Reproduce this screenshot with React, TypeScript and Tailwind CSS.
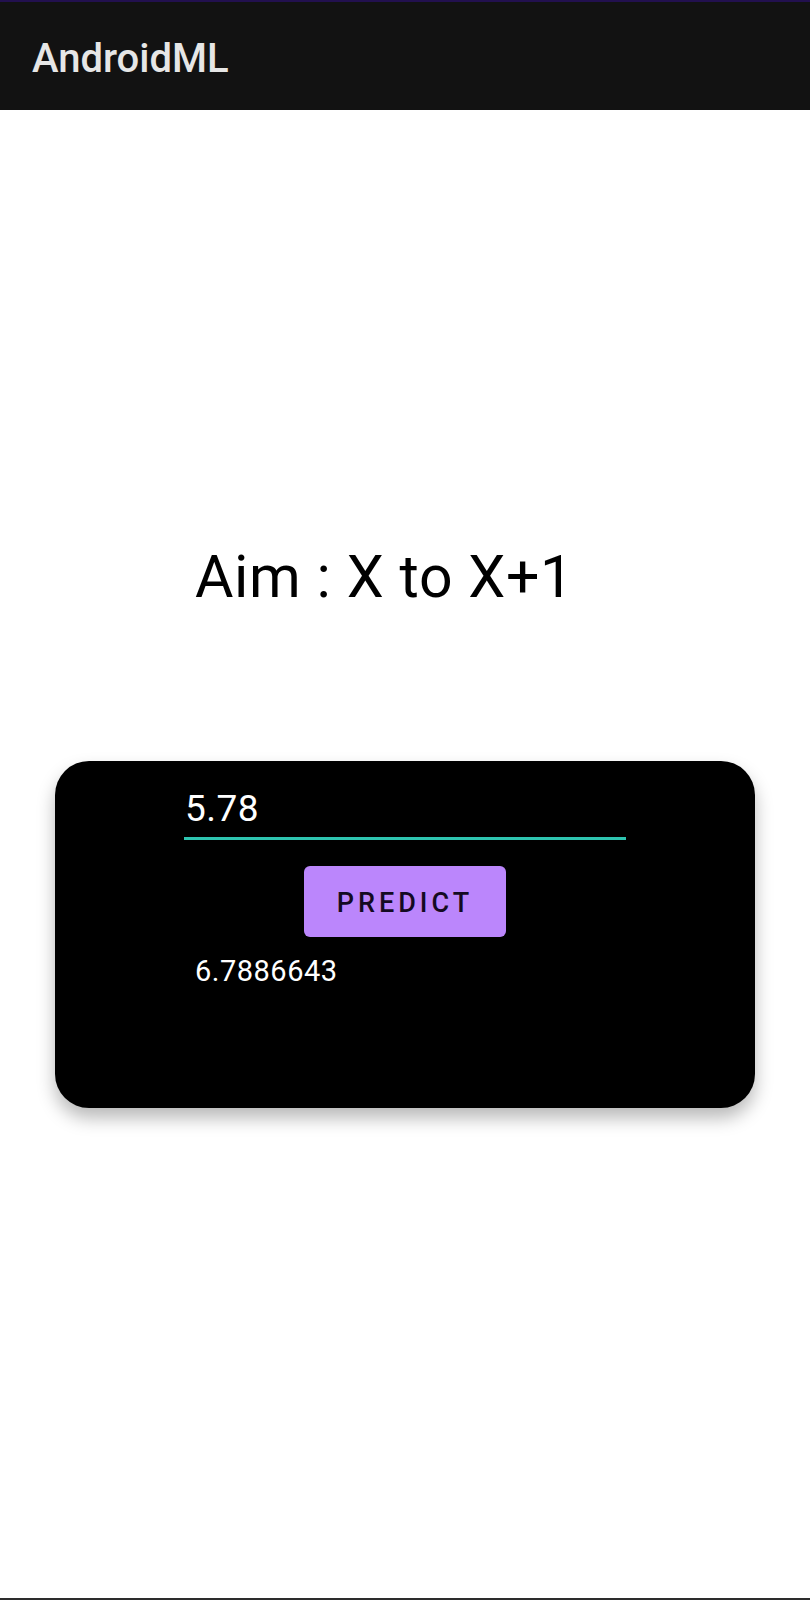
export default function App() {
  const font = { fontFamily: "Roboto, 'Noto Sans', sans-serif" };

  return (
    <div className="min-h-[1600px] w-[810px] flex flex-col bg-white" style={font}>
      <div className="h-[2px] bg-[#22104f]" />
      <div className="h-[108px] bg-[#121212] pl-[32px] pt-[37px]">
        <h1 className="text-[40px] leading-[40px] font-medium text-[#e6e6e6]">AndroidML</h1>
      </div>

      <p className="mt-[437px] pl-[195px] text-[59px] leading-[59px] tracking-[0.6px] text-black">Aim : X to X+1</p>

      <div className="mt-[155px] mx-[55px] h-[347px] rounded-[34px] bg-black shadow-[0_10px_18px_rgba(0,0,0,0.28)] flex flex-col">
        <div className="ml-[129px] w-[442px] pt-[29px]">
          <p className="pl-[1px] text-[37px] leading-[37px] tracking-[0.5px] text-white">5.78</p>
          <div className="mt-[10px] h-[3px] bg-[#2ec4b0]" />
        </div>

        <div className="mt-[26px] flex justify-center">
          <button className="w-[202px] h-[71px] pt-[4px] rounded-[6px] bg-[#bb86fc] text-[27px] font-medium tracking-[4px] text-[#140a22]">
            PREDICT
          </button>
        </div>

        <p className="mt-[20px] ml-[140px] text-[29px] leading-[29px] tracking-[0.5px] text-white">6.7886643</p>
      </div>

      <div className="mt-auto h-[2px] bg-[#2d2d2d]" />
    </div>
  );
}
